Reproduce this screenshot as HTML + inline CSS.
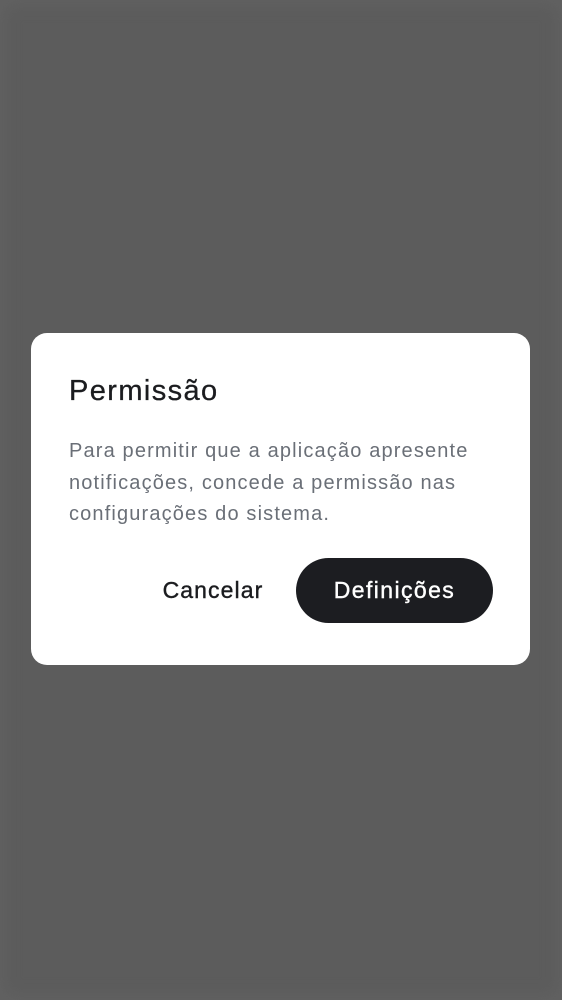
<!DOCTYPE html>
<html><head><meta charset="utf-8"><style>
html,body{margin:0;padding:0;width:562px;height:1000px;overflow:hidden;background:#5c5c5c;font-family:"Liberation Sans",sans-serif;}
body{box-shadow:inset 0 0 16px 4px #626262;}
.d{position:absolute;left:31px;top:333px;width:499px;height:332px;background:#fff;border-radius:16px;}
.t{position:absolute;left:38px;top:42px;font-size:29px;color:#1b1c1f;letter-spacing:1.4px;-webkit-text-stroke:0.3px #1b1c1f;}
.b{position:absolute;left:38px;top:103px;width:450px;font-size:20px;line-height:31.5px;color:#6a6f77;letter-spacing:1.15px;}
.c{position:absolute;left:112px;top:225px;width:140px;height:65px;line-height:65px;text-align:center;font-size:23px;color:#1b1c1f;letter-spacing:1.1px;-webkit-text-stroke:0.4px #1b1c1f;}
.p{position:absolute;left:265px;top:225px;width:197px;height:65px;line-height:65px;text-align:center;font-size:23px;color:#fff;background:#1c1d21;border-radius:33px;letter-spacing:1.4px;-webkit-text-stroke:0.4px #fff;}
</style></head><body>
<div class="d">
<div class="t">Permissão</div>
<div class="b">Para permitir que a aplicação apresente notificações, concede a permissão nas configurações do sistema.</div>
<div class="c">Cancelar</div>
<div class="p">Definições</div>
</div>
</body></html>
